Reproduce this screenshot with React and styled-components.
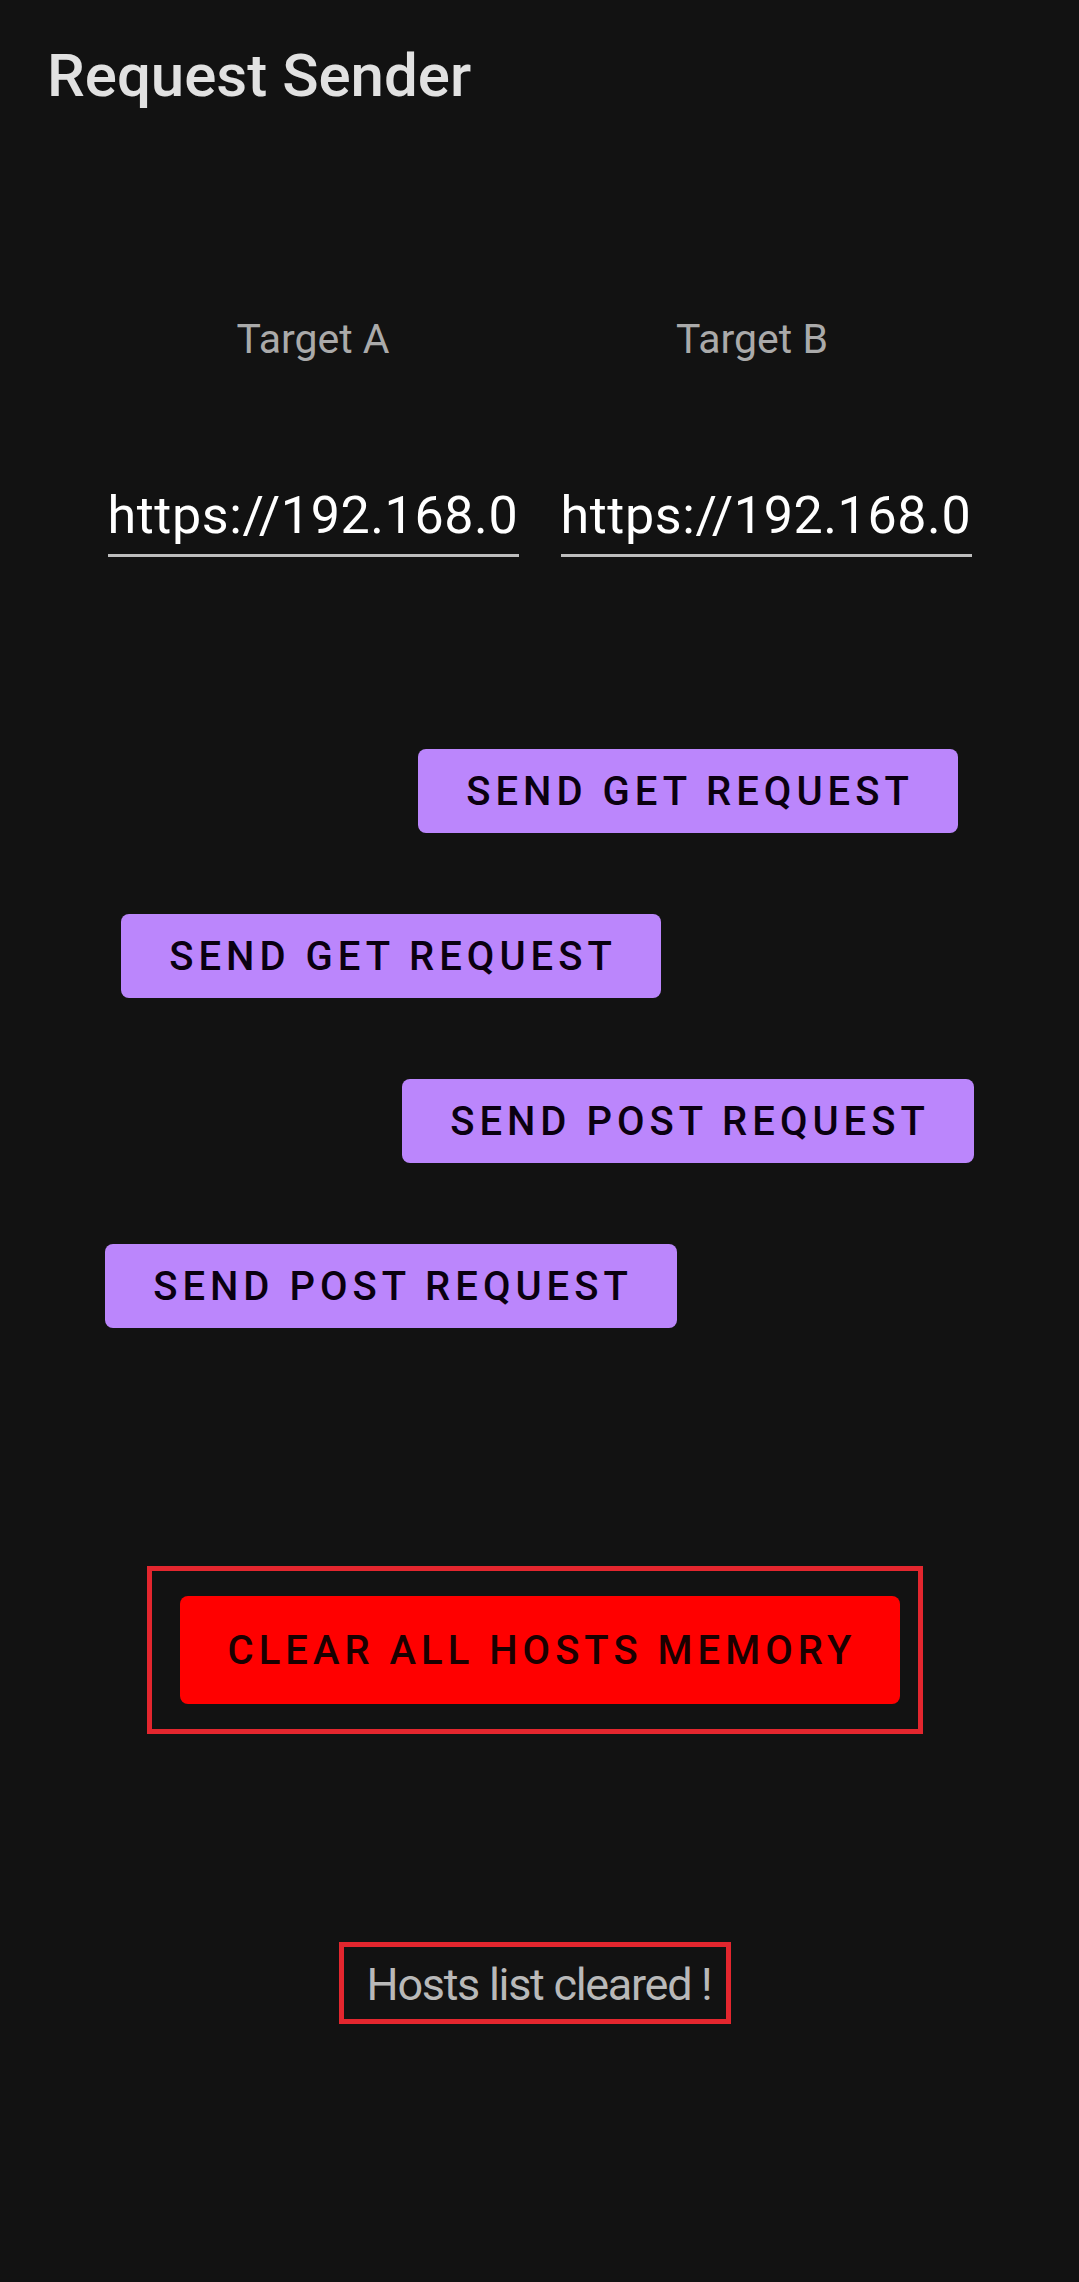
import styled, { createGlobalStyle } from "styled-components";

const GlobalStyle = createGlobalStyle`
	body {
		margin: 0;
		background: #121212;
		font-family: Roboto, "Noto Sans", sans-serif;
	}
`;

const Page = styled.div`
	display: flex;
	flex-direction: column;
	min-height: 2282px;
	background: #121212;
`;

const Title = styled.h1`
	margin: 41px 0 0 47px;
	font-size: 60px;
	line-height: 70px;
	font-weight: 500;
	color: #e1e1e1;
`;

const Targets = styled.div`
	display: grid;
	grid-template-columns: repeat(2, 411px);
	column-gap: 42px;
	row-gap: 122px;
	justify-content: center;
	margin-top: 204px;
`;

const Label = styled.div`
	font-size: 41px;
	line-height: 48px;
	color: #aaaaaa;
	text-align: center;
	padding-right: ${(p) => p.$shift || 0}px;
`;

const Field = styled.input`
	box-sizing: border-box;
	width: 100%;
	height: 72px;
	padding: 0 0 8px;
	border: none;
	border-bottom: 3px solid #bdbdbd;
	background: transparent;
	color: #ffffff;
	font-family: Roboto, sans-serif;
	font-size: 52px;
	line-height: 61px;
	letter-spacing: 0.6px;
	outline: none;
`;

const Actions = styled.div`
	display: flex;
	flex-direction: column;
	gap: 81px;
	margin-top: 192px;
`;

const ActionRow = styled.div`
	display: flex;
	justify-content: center;
	padding-left: ${(p) => (p.$side === "b" ? 297 : 0)}px;
	padding-right: ${(p) => (p.$side === "a" ? 297 : 0)}px;
`;

const Button = styled.button`
	height: ${(p) => (p.$danger ? 108 : 84)}px;
	padding: 0 44px 0 48px;
	border: none;
	border-radius: 8px;
	background: ${(p) => (p.$danger ? "#ff0000" : "#bb86fc")};
	color: ${(p) => (p.$danger ? "#1a0000" : "#0a0010")};
	font-family: Roboto, sans-serif;
	font-size: 40px;
	font-weight: 500;
	letter-spacing: 5px;
	text-transform: uppercase;
	white-space: nowrap;
	cursor: pointer;
`;

const Highlight = styled.div`
	align-self: center;
	margin-right: 9px;
	margin-top: ${(p) => p.$top}px;
	border: 5px solid #e3262e;
	padding: ${(p) => p.$pad};
`;

const Status = styled.div`
	font-size: 45px;
	line-height: 53px;
	letter-spacing: -1.3px;
	color: #b9b9b9;
`;

export default function App() {
	return (
		<>
			<GlobalStyle />
			<Page>
				<Title>Request Sender</Title>

				<Targets>
					<Label>Target A</Label>
					<Label $shift={28}>Target B</Label>
					<Field defaultValue="https://192.168.0" />
					<Field defaultValue="https://192.168.0" />
				</Targets>

				<Actions>
					<ActionRow $side="b">
						<Button>Send GET request</Button>
					</ActionRow>
					<ActionRow $side="a">
						<Button>Send GET request</Button>
					</ActionRow>
					<ActionRow $side="b">
						<Button>Send POST request</Button>
					</ActionRow>
					<ActionRow $side="a">
						<Button>Send POST request</Button>
					</ActionRow>
				</Actions>

				<Highlight $top={238} $pad="25px 18px 25px 28px">
					<Button $danger>Clear all hosts memory</Button>
				</Highlight>

				<Highlight $top={208} $pad="11px 15px 8px 23px">
					<Status>Hosts list cleared !</Status>
				</Highlight>
			</Page>
		</>
	);
}
